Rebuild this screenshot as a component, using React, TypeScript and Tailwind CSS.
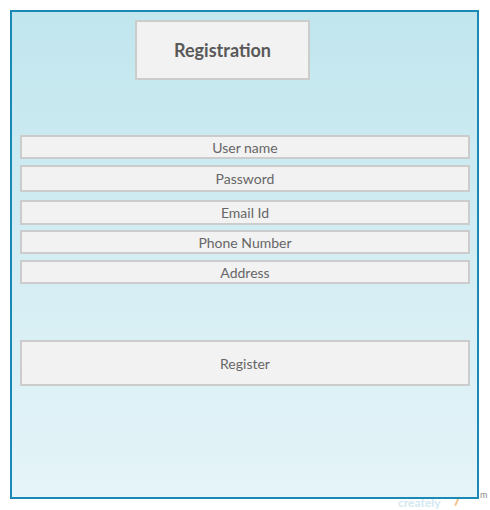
const fields = [
    { label: 'User name', h: 'h-[24px]', mt: 'mt-0' },
    { label: 'Password', h: 'h-[27px]', mt: 'mt-[6px]' },
    { label: 'Email Id', h: 'h-[25px]', mt: 'mt-[8px]' },
    { label: 'Phone Number', h: 'h-[24px]', mt: 'mt-[5px]' },
    { label: 'Address', h: 'h-[24px]', mt: 'mt-[6px]' },
];

export default function App() {
    return (
        <div className="relative w-[490px] h-[510px] bg-white" style={{ fontFamily: 'Lato, "Open Sans", sans-serif' }}>
            {/* faint watermark, mostly hidden behind the frame */}
            <div className="absolute left-[398px] top-[497px] text-[12px] font-bold text-[#d3e9f3] leading-none">creately</div>
            <div className="absolute left-[456px] top-[497px] w-[2px] h-[9px] bg-[#f7c48a] rotate-[25deg]"></div>
            <div className="absolute left-[480px] top-[490px] text-[9px] text-[#888888] leading-none">m</div>

            <div className="absolute left-[10px] top-[10px] w-[469px] h-[489px] border-2 border-[#1a8ab4] bg-gradient-to-b from-[#c1e6ee] to-[#e5f4f8] flex flex-col pl-[8px] pr-[7px]">
                <div className="mt-[8px] ml-[115px] w-[175px] h-[60px] border-2 border-[#cccccc] bg-[#f2f2f2] flex items-center justify-center">
                    <span className="text-[18px] font-bold text-[#595959]">Registration</span>
                </div>

                <div className="mt-[55px] flex flex-col">
                    {fields.map((f) => (
                        <div
                            key={f.label}
                            className={`${f.h} ${f.mt} border-2 border-[#cccccc] bg-[#f2f2f2] flex items-center justify-center text-[14px] text-[#666666]`}
                        >
                            {f.label}
                        </div>
                    ))}
                </div>

                <div className="mt-[56px] h-[46px] border-2 border-[#cccccc] bg-[#f2f2f2] flex items-center justify-center text-[14px] text-[#666666]">
                    Register
                </div>
            </div>
        </div>
    );
}
